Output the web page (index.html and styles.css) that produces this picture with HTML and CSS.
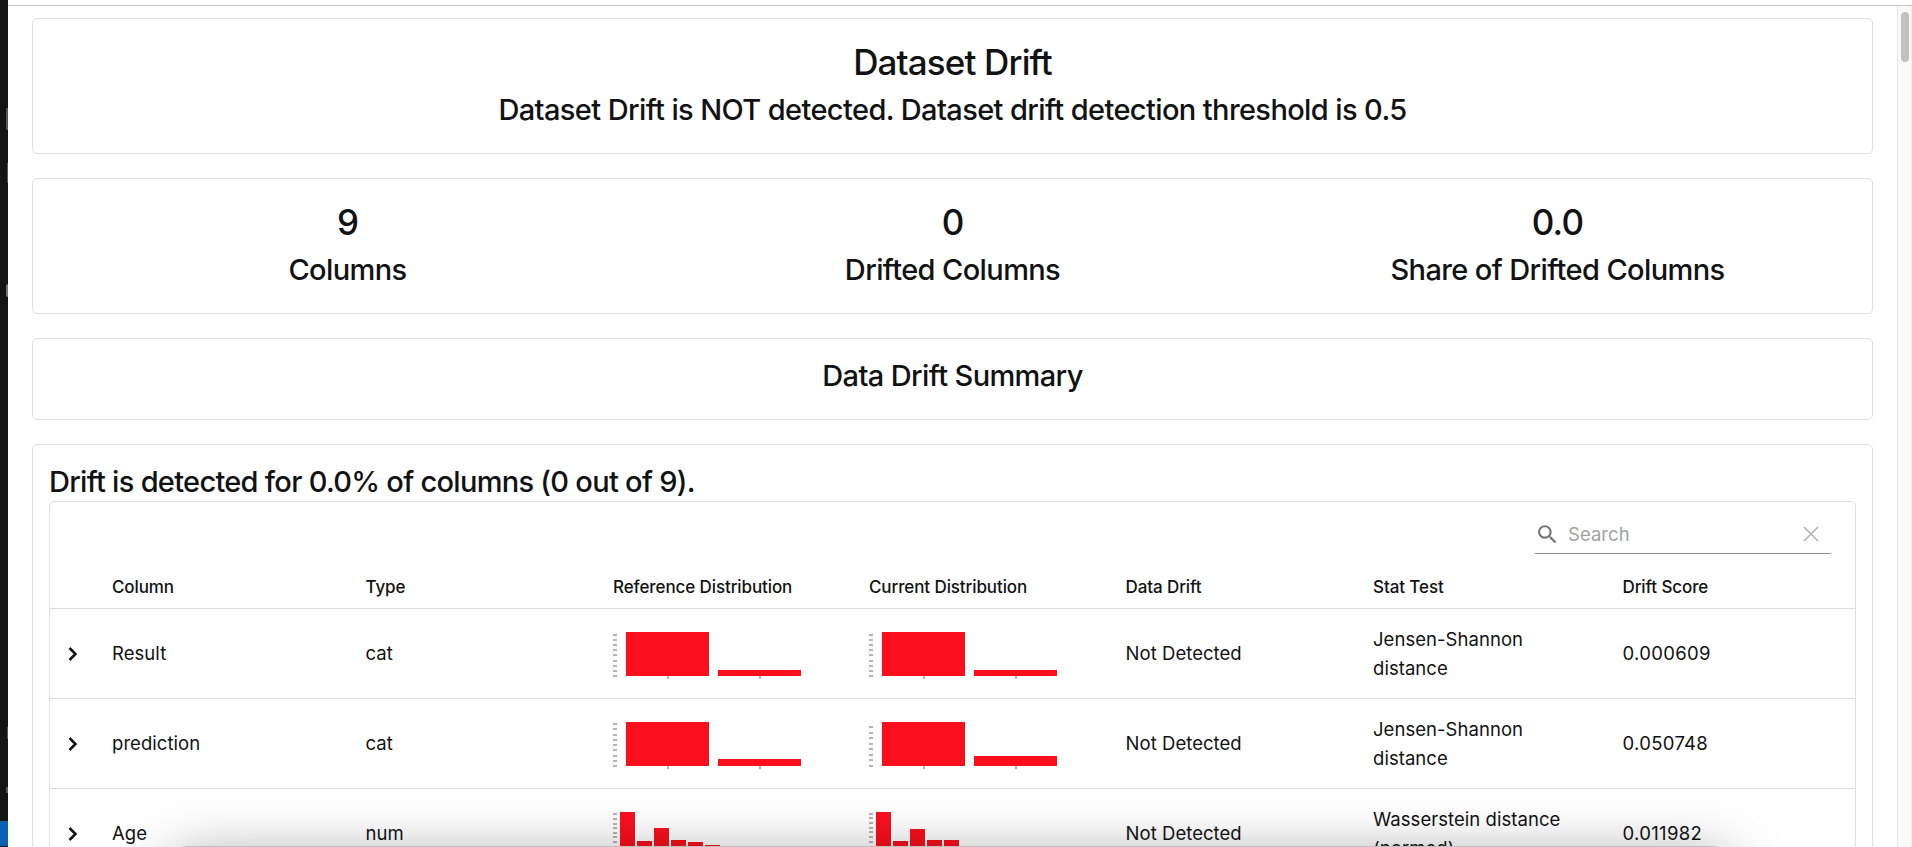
FILE: index.html
```
<!DOCTYPE html>
<html lang="en">
<head>
<meta charset="utf-8">
<title>Dataset Drift</title>
<link rel="stylesheet" href="styles.css">
</head>
<body>
<div class="backdrop"><i class="glyph g1"></i><i class="glyph g2"></i><i class="glyph g3"></i><i class="glyph g4"></i><i class="glyph g5"></i><div class="status"></div></div>
<div class="window">
  <main class="report">
    <section class="card tall">
      <div class="stat"><h4>Dataset Drift</h4><h5>Dataset Drift is NOT detected. Dataset drift detection threshold is 0.5</h5></div>
    </section>
    <section class="card tall">
      <div class="stat"><h4>9</h4><h5>Columns</h5></div>
      <div class="stat"><h4>0</h4><h5>Drifted Columns</h5></div>
      <div class="stat"><h4>0.0</h4><h5>Share of Drifted Columns</h5></div>
    </section>
    <section class="card short"><div class="stat"><h5>Data Drift Summary</h5></div></section>
    <section class="card details">
      <h5 class="lead">Drift is detected for 0.0% of columns (0 out of 9).</h5>
      <div class="table">
        <div class="toolbar">
          <label class="search">
            <svg class="mag" viewBox="0 0 24 24"><path fill="currentColor" d="M15.5 14h-.79l-.28-.27C15.41 12.59 16 11.11 16 9.5 16 5.91 13.09 3 9.5 3S3 5.91 3 9.5 5.91 16 9.5 16c1.61 0 3.09-.59 4.23-1.57l.27.28v.79l5 4.99L20.49 19l-4.99-5zm-6 0C7.01 14 5 11.99 5 9.5S7.01 5 9.5 5 14 7.01 14 9.5 11.99 14 9.5 14z"/></svg>
            <span class="placeholder">Search</span>
            <svg class="clear" viewBox="0 0 16 16"><path d="M1 1L15 15M15 1L1 15" fill="none" stroke="currentColor" stroke-width="1.5"/></svg>
          </label>
        </div>
        <div class="row head"><span></span><span>Column</span><span>Type</span><span>Reference Distribution</span><span>Current Distribution</span><span>Data Drift</span><span>Stat Test</span><span>Drift Score</span></div>
        <div class="row">
          <svg class="chev" viewBox="0 0 10 16"><path d="M1.5 2L7.5 8L1.5 14" fill="none" stroke="currentColor" stroke-width="2.5"/></svg>
          <span>Result</span><span>cat</span>
          <svg class="chart" viewBox="0 0 190 50"><path class="tick" d="M0 3h4M0 8h4M0 13h4M0 18h4M0 23h4M0 29h4M0 34h4M0 39h4M0 44h4M55 44v3M147 44v3"/><path class="bar" d="M13 0h83v44h-83zM105 38h83v6h-83z"/></svg>
          <svg class="chart" viewBox="0 0 190 50"><path class="tick" d="M0 3h4M0 8h4M0 13h4M0 18h4M0 23h4M0 29h4M0 34h4M0 39h4M0 44h4M55 44v3M147 44v3"/><path class="bar" d="M13 0h83v44h-83zM105 38h83v6h-83z"/></svg>
          <span>Not Detected</span><span>Jensen-Shannon distance</span><span class="score">0.000609</span>
        </div>
        <div class="row">
          <svg class="chev" viewBox="0 0 10 16"><path d="M1.5 2L7.5 8L1.5 14" fill="none" stroke="currentColor" stroke-width="2.5"/></svg>
          <span>prediction</span><span>cat</span>
          <svg class="chart" viewBox="0 0 190 50"><path class="tick" d="M0 2h4M0 7h4M0 13h4M0 18h4M0 23h4M0 28h4M0 34h4M0 39h4M0 44h4M55 44v3M147 44v3"/><path class="bar" d="M13 0h83v44h-83zM105 37h83v7h-83z"/></svg>
          <svg class="chart" viewBox="0 0 190 50"><path class="tick" d="M0 5h4M0 11h4M0 16h4M0 22h4M0 27h4M0 33h4M0 38h4M0 44h4M55 44v3M147 44v3"/><path class="bar" d="M13 0h83v44h-83zM105 34h83v10h-83z"/></svg>
          <span>Not Detected</span><span>Jensen-Shannon distance</span><span class="score">0.050748</span>
        </div>
        <div class="row">
          <svg class="chev" viewBox="0 0 10 16"><path d="M1.5 2L7.5 8L1.5 14" fill="none" stroke="currentColor" stroke-width="2.5"/></svg>
          <span>Age</span><span>num</span>
          <svg class="chart" viewBox="0 0 190 50"><path class="tick" d="M0 2h4M0 7h4M0 12h4M0 16h4M0 21h4M0 25h4M0 30h4M0 35h4M0 39h4M0 44h4"/><path class="bar" d="M7 0h15v44h-15zM24 29h15v15h-15zM41 16h15v28h-15zM58 28h15v16h-15zM75 30h15v14h-15zM92 33h15v11h-15z"/></svg>
          <svg class="chart" viewBox="0 0 190 50"><path class="tick" d="M0 2h4M0 6h4M0 11h4M0 16h4M0 20h4M0 25h4M0 30h4M0 35h4M0 39h4M0 44h4"/><path class="bar" d="M7 0h15v44h-15zM24 29h15v15h-15zM41 17h15v27h-15zM58 28h15v16h-15zM75 28h15v16h-15z"/></svg>
          <span>Not Detected</span><span>Wasserstein distance (normed)</span><span class="score">0.011982</span>
        </div>
      </div>
    </section>
  </main>
  <div class="scrollbar"><div class="thumb"></div></div>
</div>
<div class="overlay"></div>
</body>
</html>
```
FILE: styles.css
```
* { box-sizing: border-box; }
html { overflow: hidden; }
body {
  margin: 0;
  width: 1912px;
  height: 847px;
  overflow: hidden;
  display: flex;
  position: relative;
  background: #fff;
  color: #111213;
  font-family: Inter, "Liberation Sans", sans-serif;
}
.backdrop {
  width: 8px;
  flex: none;
  position: relative;
  overflow: hidden;
  background: #141414;
  display: flex;
  flex-direction: column;
  justify-content: flex-end;
}
.status { height: 26px; background: #0762b4; border-bottom: 1px solid #0a1c30; }
.glyph { position: absolute; right: 0; width: 1px; background: #777; }
.g1 { top: 108px; height: 22px; width: 2px; background: #555; }
.g2 { top: 163px; height: 20px; background: #555; }
.g3 { top: 284px; height: 13px; width: 2px; border-radius: 2px 0 0 2px; }
.g4 { top: 727px; height: 12px; background: #555; }
.g5 { top: 787px; height: 6px; width: 2px; background: #555; }
.window {
  flex: 1;
  min-width: 0;
  margin-top: 5px;
  height: 842px;
  border-top: 1px solid #c6c6c7;
  display: flex;
}
.report {
  flex: 1;
  min-width: 0;
  padding: 12px 24px 0;
  display: flex;
  flex-direction: column;
  gap: 24px;
  overflow: hidden;
}
.card { flex: none; border: 1px solid #e0e0e0; border-radius: 5px; }
.tall, .short { display: flex; padding: 20px 12px; }
.tall { height: 136px; }
.short { height: 82px; padding-top: 14px; }
.stat { flex: 1; text-align: center; }
h4, h5 { margin: 0; font-weight: 500; white-space: nowrap; }
h4 { font-size: 35px; line-height: 46px; letter-spacing: -0.85px; }
h5 { font-size: 29px; line-height: 44px; letter-spacing: -0.61px; padding-top: 1px; }
.tall h5 { padding-top: 3px; }
.details { height: 560px; padding: 16px; }
.lead { height: 40px; line-height: 42px; padding: 0; letter-spacing: -0.71px; }
.table { border: 1px solid #e0e0e0; border-radius: 5px; height: 600px; }
.toolbar { height: 64px; display: flex; justify-content: flex-end; padding: 12px 24px 0 0; }
.search {
  width: 296px;
  height: 40px;
  border-bottom: 1px solid #8c8c8c;
  display: flex;
  align-items: center;
  color: #757575;
}
.mag { width: 25px; height: 25px; margin-top: 1px; }
.placeholder { flex: 1; margin: 1px 0 0 8px; font-size: 18.5px; color: #a2a2a2; letter-spacing: 0.05px; }
.clear { width: 16px; height: 16px; margin: 1px 12px 0 0; color: #b0b0b0; }
.row {
  display: grid;
  grid-template-columns: 62px 253.5px 247.5px 256px 256.5px 247.5px 249.5px 1fr;
  align-items: center;
  height: 90px;
  border-bottom: 1px solid #dcdcdc;
  font-size: 18.5px;
  line-height: 29px;
  letter-spacing: 0.05px;
}
.row > span:nth-child(7) { max-width: 200px; }
.row > .score { letter-spacing: 0.32px; }
.head { height: 43px; font-size: 17px; font-weight: 500; letter-spacing: -0.1px; }
.chev { width: 10px; height: 16px; margin-left: 18px; }
.chart { width: 190px; height: 50px; margin-top: 6px; shape-rendering: crispEdges; }
.tick { stroke: #b4b4b4; stroke-width: 2; fill: none; }
.bar { fill: #fb0f1c; }
.scrollbar {
  flex: none;
  width: 15px;
  background: #f9f9f9;
  border-left: 1px solid #e6e6e6;
  border-right: 1px solid #eee;
  padding: 6px 2px 0 3px;
}
.thumb { width: 8px; height: 50px; border-radius: 4px; background: #c1c1c1; }
.overlay {
  position: absolute;
  left: 172px;
  top: 846px;
  width: 1556px;
  height: 400px;
  border-radius: 16px;
  background: #c0c0c0;
  box-shadow: 0 14px 60px rgba(0, 0, 0, 0.42);
}
```
